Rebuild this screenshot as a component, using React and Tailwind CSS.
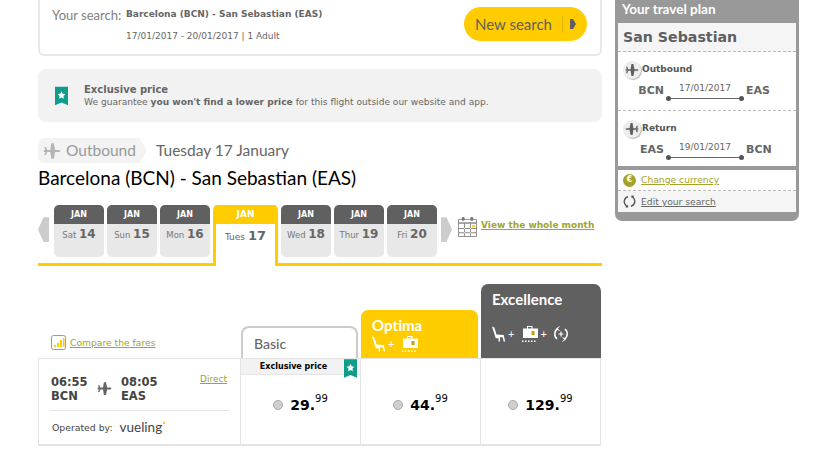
import React from "react";

const heading = "font-['Lato',sans-serif]";
const olive = "text-[#a3a32a]";

const PlaneIcon = ({ className }) => (
  <svg viewBox="0 0 20 20" className={className} fill="currentColor">
    <path d="M1 8.800H8L9.200 1.500H12L13.500 8.800H18Q20.500 10 18 11.200H13.500L12 18.500H9.200L8 11.200H1z" />
    <path d="M1.500 5.500h1.800l1.400 3.500H2.500zM1.500 14.500h1.800l1.400-3.500H2.500z" />
  </svg>
);

const Bookmark = ({ className }) => (
  <svg viewBox="0 0 14 20" className={className}>
    <path d="M0 0h14v20l-7-3-7 3z" fill="#0f9d8a" />
    <path d="M7 5l1.300 2.700 2.900.4-2.100 2 .5 2.900L7 11.600 4.400 13l.5-2.900-2.100-2 2.900-.4z" fill="#fff" />
  </svg>
);

const SeatIcon = () => (
  <svg viewBox="0 0 16 16" className="w-[15px] h-[16px]" fill="#fff">
    <path d="M0 0l2.500 1 2.300 7.500 7.700.5 1.500 7h-1.500l-1.200-4.500H8.500V16H7v-3.500L4 12.500z" />
  </svg>
);

const BagIcon = () => (
  <svg viewBox="0 0 18 18" className="w-[18px] h-[18px]" fill="#fff">
    <path d="M6 3.500V1h5.500v2.500H17V13H2V3.500H6zM7 2v1.500h3.500V2H7z" />
    <rect x="10.500" y="6" width="3" height="4" fill="#caa000" />
    <path d="M1 15.500h1.500V17H1zM4 15.500h1.500V17H4zM7 15.500h1.500V17H7zM10 15.500h1.500V17H10zM13 15.500h1.500V17H13z" />
  </svg>
);

const ExtraIcon = () => (
  <svg viewBox="0 0 16 16" className="w-[16px] h-[16px]" fill="none" stroke="#fff" strokeWidth="1.500">
    <path d="M5 2.500A6.500 6.500 0 0 0 4 13M11 13.500A6.500 6.500 0 0 0 12 3" />
    <path d="M8 5.500v5M5.500 8h5" strokeWidth="1.200" />
    <path d="M6.500 .5L3.500 2.800 6.500 4.500M9.500 15.500l3-2.300-3-1.700" strokeWidth="1" />
  </svg>
);

const CalendarIcon = () => (
  <svg viewBox="0 0 20 22" className="w-[19px] h-[21px]">
    <path d="M.5 3.500h19v18H.5z" fill="#fff" stroke="#8a8a8a" />
    <rect x="4" y="1" width="3" height="4" rx="1" fill="#777" />
    <rect x="13" y="1" width="3" height="4" rx="1" fill="#777" />
    <path d="M0 6.500h20v1.500H0zM6.300 8v13h1V8zM12.700 8v13h1V8zM0 12.500h20v1H0zM0 17h20v1H0z" fill="#8a8a8a" />
    <rect x="15" y="9.500" width="3" height="2.500" fill="#ffcc00" />
  </svg>
);

const CircleIcon = ({ flip }) => (
  <div className="w-[18px] h-[18px] rounded-full bg-[#eeeeee] shadow-[1px_1px_1px_#bbb] flex items-center justify-center text-[#5f5f5f]">
    <PlaneIcon className={`w-[14px] h-[14px] ${flip ? "rotate-180" : ""}`} />
  </div>
);

const Radio = () => (
  <span className="w-[10px] h-[10px] rounded-full bg-[#cfcfcf] border border-[#a9a9a9] shrink-0" />
);

const Price = ({ whole, cents, className }) => (
  <div className={`flex-1 flex items-center justify-center gap-[7px] text-black ${className}`}>
    <Radio />
    <div className="font-bold text-[14px] leading-none">
      {whole}.<sup className="text-[10px] font-normal align-[3px] leading-none">{cents}</sup>
    </div>
  </div>
);

const DayTab = ({ day, num }) => (
  <div className="w-[50px] h-[52px] rounded-[5px] bg-[#e8e8e8] overflow-hidden shrink-0">
    <div className="h-[19px] bg-[#606060] text-white text-[8px] font-bold flex items-center justify-center">JAN</div>
    <div className="pt-[2px] text-center text-[#777] text-[8.500px] leading-[16px]">
      {day} <span className="text-[12px] font-bold text-[#666]">{num}</span>
    </div>
  </div>
);

const Leg = ({ title, from, to, date, flip, className }) => (
  <div className={`border-dashed border-[#bbb] px-[5px] pt-[9px] ${className}`}>
    <div className="flex items-center gap-[1px] text-[9px] font-bold text-[#555]">
      <CircleIcon flip={flip} />
      {title}
    </div>
    <div className="flex mt-[1px] text-[#666]">
      <span className="w-[41px] text-right text-[11px] font-bold leading-[22px]">{from}</span>
      <div className="w-[78px] ml-[2px]">
        <div className="mt-[1px] text-[9px] text-center leading-[14px]">{date}</div>
        <div className="h-[1px] bg-[#666] mt-[3px] mx-[2px] flex items-center justify-between">
          <span className="w-[5px] h-[5px] rounded-full bg-[#555] -ml-[2px]" />
          <span className="w-[5px] h-[5px] rounded-full bg-[#555] -mr-[2px]" />
        </div>
      </div>
      <span className="text-[11px] font-bold leading-[22px] ml-[2px]">{to}</span>
    </div>
  </div>
);

const App = () => {
  return (
    <div className="w-[820px] h-[468px] overflow-hidden bg-white pl-[38px] flex items-start gap-[13px] font-['DejaVu_Sans',sans-serif] text-[#666]">
      {/* left column */}
      <div className="w-[564px] shrink-0">
        <div className="h-[56px] border-x-2 border-b-2 border-[#e8e8e8] rounded-b-[6px] flex items-start pl-[12px] pr-[13px]">
          <div className={`${heading} text-[13px] w-[74px] pt-[6px] text-[#808080]`}>Your search:</div>
          <div className="pt-[8px] text-[9px] text-[#666]">
            <div className="font-bold leading-[13px]">Barcelona (BCN) - San Sebastian (EAS)</div>
            <div className="mt-[9px] leading-[13px]">17/01/2017 - 20/01/2017 | 1 Adult</div>
          </div>
          <div className={`${heading} ml-auto mt-[7px] h-[34px] w-[123px] rounded-full bg-[#ffcc00] flex items-center justify-center text-[15px] text-[#5f5f5f]`}>
            New search
            <span className="w-[1px] h-[16px] bg-[#e0b000] ml-[10px] mr-[7px]" />
            <svg viewBox="0 0 6 10" className="w-[6px] h-[12px]" fill="#5f5f5f"><path d="M0 0h3l3 5-3 5H0z" /></svg>
          </div>
        </div>

        <div className="mt-[13px] h-[53px] rounded-[8px] bg-[#f2f2f2] flex items-center pl-[17px]">
          <Bookmark className="w-[13px] h-[20px] shrink-0" />
          <div className="ml-[16px]">
            <div className="text-[10px] font-bold leading-[13px] text-[#666]">Exclusive price</div>
            <div className="text-[9.070px] leading-[12px]">
              We guarantee <b>you won't find a lower price</b> for this flight outside our website and app.
            </div>
          </div>
        </div>

        <div className="mt-[16px] flex items-center h-[25px]">
          <div className={`${heading} w-[109px] h-[25px] rounded-l-[6px] bg-[#f3f3f3] flex items-center pl-[5px] gap-[5px] text-[#999] text-[15.500px] [clip-path:polygon(0_0,93%_0,100%_50%,93%_100%,0_100%)]`}>
            <PlaneIcon className="w-[18px] h-[18px] text-[#b5b5b5]" />
            Outbound
          </div>
          <div className={`${heading} ml-[9px] text-[15.500px] text-[#666] leading-none`}>Tuesday 17 January</div>
        </div>
        <div className={`${heading} mt-[1px] text-[19px] leading-[28px] text-black`}>Barcelona (BCN) - San Sebastian (EAS)</div>

        {/* date tabs */}
        <div className="mt-[13px] h-[61px] flex items-stretch">
          <div className="w-[175px] flex flex-col">
            <div className="flex items-start">
              <svg viewBox="0 0 12 27" className="w-[11px] h-[27px] mt-[11px] mr-[5px]" fill="#cccccc"><path d="M12 0v27H6L0 13.500 6 0z" /></svg>
              <div className="flex gap-[3px]">
                <DayTab day="Sat" num="14" />
                <DayTab day="Sun" num="15" />
                <DayTab day="Mon" num="16" />
              </div>
            </div>
            <div className="mt-auto h-[3px] bg-[#ffcc00]" />
          </div>
          <div className="w-[65px] shrink-0 border-x-[3px] border-[#ffcc00] rounded-t-[5px]">
            <div className="h-[19px] -mx-[1px] bg-[#ffcc00] text-white text-[9px] font-bold flex items-center justify-center">JAN</div>
            <div className="pt-[4px] text-center text-[#666] text-[9px] leading-[16px] whitespace-nowrap">
              Tues <span className="text-[13px] font-bold">17</span>
            </div>
          </div>
          <div className="flex-1 flex flex-col">
            <div className="flex items-start pl-[3px]">
              <div className="flex gap-[3px]">
                <DayTab day="Wed" num="18" />
                <DayTab day="Thur" num="19" />
                <DayTab day="Fri" num="20" />
              </div>
              <svg viewBox="0 0 12 27" className="w-[11px] h-[27px] mt-[11px] ml-[4px]" fill="#cccccc"><path d="M0 0v27h6l6-13.500L6 0z" /></svg>
              <div className="mt-[11px] ml-[6px]"><CalendarIcon /></div>
              <span className={`mt-[14px] ml-[4px] text-[9px] font-bold underline ${olive} whitespace-nowrap`}>View the whole month</span>
            </div>
            <div className="mt-auto h-[3px] bg-[#ffcc00]" />
          </div>
        </div>

        {/* fare headers */}
        <div className="mt-[17px] h-[75px] flex items-end">
          <div className="w-[203px] h-[31px] pl-[13px] pt-[8px] flex items-start gap-[4px]">
            <svg viewBox="0 0 15 15" className="w-[15px] h-[15px]">
              <rect x=".5" y=".5" width="14" height="14" rx="2" fill="#fff" stroke="#999" />
              <path d="M3 10h2v2H3zM6 8h2v4H6zM9 5h2v7H9zM12 3h1.500v9H12z" fill="#ffcc00" />
            </svg>
            <span className={`text-[9.200px] leading-[15px] underline ${olive}`}>Compare the fares</span>
          </div>
          <div className={`${heading} w-[117px] h-[32px] border-2 border-b-0 border-[#ccc] rounded-t-[8px] pl-[11px] pt-[7px] text-[14px] leading-[18px] text-[#666] font-medium`}>Basic</div>
          <div className={`${heading} w-[117px] h-[48px] ml-[3px] bg-[#ffcc00] rounded-t-[7px] pl-[11px] pt-[7px] text-white text-[15px] font-bold leading-[16px]`}>
            Optima
            <div className="flex items-center gap-[1px] mt-[2px] text-[11px] font-normal"><SeatIcon />+<span className="w-[5px]" /><BagIcon /></div>
          </div>
          <div className={`${heading} w-[120px] h-[74px] ml-[3px] bg-[#606060] rounded-t-[7px] pl-[11px] pt-[6px] text-white text-[15px] font-bold leading-[18px]`}>
            Excellence
            <div className="flex items-center gap-[1px] mt-[17px] text-[11px] font-normal">
              <SeatIcon />+<span className="w-[5px]" /><BagIcon />+
              <span className="ml-[5px]"><ExtraIcon /></span>
            </div>
          </div>
        </div>

        {/* fare row */}
        <div className="h-[88px] w-[563px] border-x border-b-2 border-t border-[#e4e4e4] flex">
          <div className="w-[202px] shrink-0 flex flex-col pl-[12px] pr-[11px] border-r border-[#e4e4e4]">
            <div className="h-[52px] flex pt-[16px] border-b border-[#e4e4e4] -ml-[1px] pl-[1px] text-[#444] font-bold text-[11.500px] leading-[14px]">
              <div className="w-[46px]">06:55<br />BCN</div>
              <PlaneIcon className="w-[15px] h-[15px] mt-[6px] text-[#666]" />
              <div className="ml-[9px]">08:05<br />EAS</div>
              <span className={`ml-auto mr-[2px] -mt-[3px] text-[9px] font-normal underline ${olive}`}>Direct</span>
            </div>
            <div className="flex items-center flex-1 pl-[1px] text-[9.300px] text-[#444]">
              Operated by:
              <span className={`${heading} ml-[7px] text-[13.500px] text-[#444] leading-none`}>vueling</span>
              <span className="w-[2px] h-[2px] ml-[1px] bg-[#ffcc00] mb-[9px]" />
            </div>
          </div>
          <div className="w-[120px] shrink-0 flex flex-col border-r border-[#e4e4e4]">
            <div className="h-[16px] bg-[#f2f2f2] border-b border-[#e4e4e4] flex items-start">
              <span className="flex-1 text-center text-[8px] font-bold text-black leading-[15px] pl-[2px]">Exclusive price</span>
              <Bookmark className="w-[13px] h-[19px] mr-[3px] shrink-0" />
            </div>
            <Price whole="29" cents="99" className="pb-[10px]" />
          </div>
          <div className="w-[120px] shrink-0 flex border-r border-[#e4e4e4]"><Price whole="44" cents="99" className="pt-[6px]" /></div>
          <div className="flex-1 flex"><Price whole="129" cents="99" className="pt-[6px]" /></div>
        </div>
      </div>

      {/* travel plan */}
      <aside className="w-[184px] shrink-0 h-[221px] bg-[#999] rounded-b-[7px] px-[3px]">
        <div className={`${heading} h-[23px] pl-[4px] text-[13.500px] font-bold text-white leading-[18px]`}>Your travel plan</div>
        <div className="h-[143px] bg-white flex flex-col">
          <div className="h-[29px] shrink-0 bg-[#f5f5f5] border-b border-dashed border-[#bbb] pl-[5px] text-[14.200px] font-bold text-[#5f5f5f] leading-[28px]">San Sebastian</div>
          <Leg title="Outbound" from="BCN" to="EAS" date="17/01/2017" className="h-[59px] shrink-0 border-b" />
          <Leg title="Return" from="EAS" to="BCN" date="19/01/2017" className="flex-1" flip />
        </div>
        <div className="mt-[4px] h-[42px] flex flex-col text-[9.200px]">
          <div className={`h-[21px] bg-white border-b border-dashed border-[#bbb] flex items-center pl-[5px] gap-[5px] underline ${olive}`}>
            <span className="w-[13px] h-[13px] rounded-full bg-[#a3a32a] text-white text-[8px] font-bold flex items-center justify-center no-underline">€</span>
            Change currency
          </div>
          <div className="h-[21px] bg-[#f5f5f5] flex items-center pl-[5px] gap-[5px] underline text-[#666]">
            <svg viewBox="0 0 14 14" className="w-[13px] h-[13px]" fill="none" stroke="#555" strokeWidth="1.500">
              <path d="M5.500 1.800A5.500 5.500 0 0 0 3.500 11.500M8.500 12.200A5.500 5.500 0 0 0 10.500 2.500" />
              <path d="M3 11h2.500v2.500H3zM9 .5h2.500V3H9z" fill="#555" stroke="none" />
            </svg>
            Edit your search
          </div>
        </div>
      </aside>
    </div>
  );
};

export default App;
